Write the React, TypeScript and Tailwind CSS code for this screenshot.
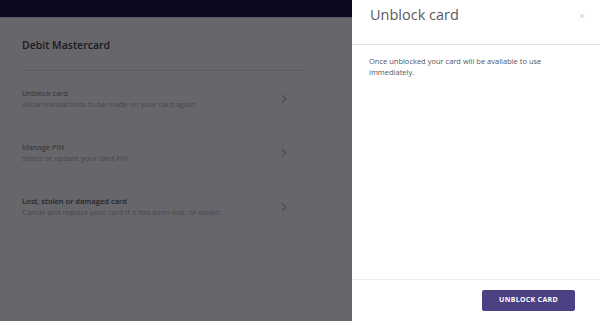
import { ChevronRight, X } from 'lucide-react'

const opcoes = [
  { titulo: 'Unblock card', sub: 'Allow transactions to be made on your card again.', forte: false },
  { titulo: 'Manage PIN', sub: 'Select or update your card PIN.', forte: false },
  { titulo: 'Lost, stolen or damaged card', sub: 'Cancel and replace your card if it has been lost, or stolen.', forte: true },
]

export default function App() {
  return (
    <div className="flex h-[321px] w-[600px] overflow-hidden font-['Open_Sans',sans-serif]">
      {/* pagina por tras do overlay */}
      <div className="flex-1 flex flex-col bg-[#67666b]">
        <div className="h-[18px] bg-[#0b0920] border-b border-[#55545a]" />
        <div className="pl-[22px] pr-[48px] pt-[20px]">
          <h2 className="text-[10.5px] font-semibold text-[#1a1920] leading-[14px]">Debit Mastercard</h2>
          <div className="mt-[18px] h-px bg-[#5d5c61]" />
          <div className="flex flex-col">
            {opcoes.map((o, i) => (
              <div key={o.titulo} className={`flex items-center justify-between ${i === 0 ? 'mt-[17px]' : 'mt-[32px]'}`}>
                <div className="leading-[11px]">
                  <p className={`text-[7.5px] ${o.forte ? 'font-semibold text-[#26252b]' : 'text-[#323137]'}`}>{o.titulo}</p>
                  <p className="text-[7.5px] text-[#48474e]">{o.sub}</p>
                </div>
                <ChevronRight className="w-[14px] h-[14px] text-[#2e2d33] mr-[13px]" strokeWidth={1.4} />
              </div>
            ))}
          </div>
        </div>
      </div>

      {/* drawer */}
      <div className="w-[248px] bg-white flex flex-col">
        <div className="h-[45px] flex items-start justify-between pl-[18px] pr-[14px] pt-[5px] border-b border-[#e3e3e6]">
          <h1 className="text-[14.5px] text-[#5a5a5f] font-normal leading-[20px]">Unblock card</h1>
          <X className="w-[8px] h-[8px] text-[#b8b8bc] mt-[7px]" strokeWidth={2} />
        </div>
        <div className="flex-1 pl-[17px] pr-[20px] pt-[11px]">
          <p className="text-[7.5px] leading-[11px] text-[#55555a]">
            Once unblocked your card will be available to use immediately.
          </p>
        </div>
        <div className="h-[42px] border-t border-[#eeeef0] flex items-center justify-end pr-[25px]">
          <button className="h-[21px] w-[93px] rounded-[2px] bg-[#4b4183] text-white text-[7px] font-bold tracking-[0.3px]">
            UNBLOCK CARD
          </button>
        </div>
      </div>
    </div>
  )
}
